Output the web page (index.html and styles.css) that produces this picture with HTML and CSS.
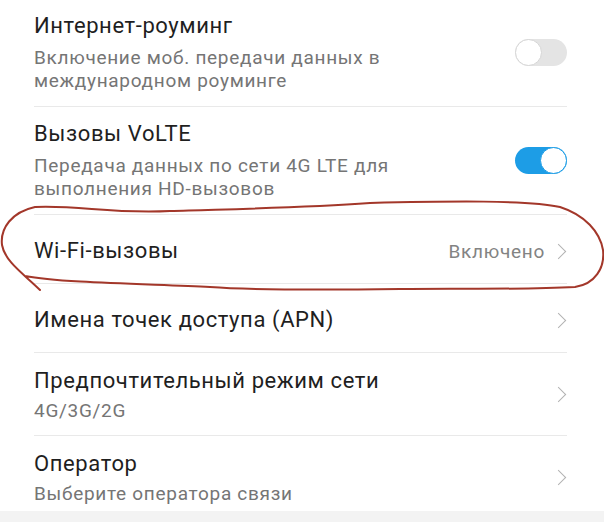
FILE: index.html
```html
<!DOCTYPE html>
<html>
<head>
    <title>Мобильная сеть</title>
    <link rel="stylesheet" href="styles.css">
</head>
<body>
    <div class="settings">
        <div class="row row-multi">
            <div class="text">
                <div class="title">Интернет-роуминг</div>
                <div class="summary">Включение моб. передачи данных в<br>международном роуминге</div>
            </div>
            <span class="switch"></span>
        </div>
        <div class="row row-multi">
            <div class="text">
                <div class="title">Вызовы VoLTE</div>
                <div class="summary">Передача данных по сети 4G LTE для<br>выполнения HD-вызовов</div>
            </div>
            <span class="switch on"></span>
        </div>
        <div class="row row-single">
            <div class="text">
                <div class="title">Wi-Fi-вызовы</div>
            </div>
            <span class="value">Включено</span>
            <span class="chevron"></span>
        </div>
        <div class="row row-single">
            <div class="text">
                <div class="title">Имена точек доступа (APN)</div>
            </div>
            <span class="chevron"></span>
        </div>
        <div class="row">
            <div class="text">
                <div class="title">Предпочтительный режим сети</div>
                <div class="summary">4G/3G/2G</div>
            </div>
            <span class="chevron"></span>
        </div>
        <div class="row row-last">
            <div class="text">
                <div class="title">Оператор</div>
                <div class="summary">Выберите оператора связи</div>
            </div>
            <span class="chevron"></span>
        </div>
        <div class="footer"></div>
    </div>

    <!-- hand drawn mark round the Wi-Fi row -->
    <svg class="scribble" width="604" height="522" viewBox="0 0 604 522">
        <path d="M40 290 C25 275, 5 262, 2 245 C0 228, 12 212, 35 207 C80 205, 110 214, 170 211 C230 209, 300 208, 370 203 C450 201, 530 200, 560 207 C585 215, 600 232, 603 250 C605 268, 595 284, 575 287 C520 290, 460 288, 400 289 C320 290, 250 290, 210 287 C150 284, 60 283, 25 276"
              fill="none" stroke="#a3372a" stroke-width="2" stroke-linecap="round"/>
    </svg>
</body>
</html>
```

FILE: styles.css
```css
body {
    background-color: #ffffff;
    color: #1e1e1e;
    font-family: 'Roboto', 'Noto Sans', sans-serif;
    margin: 0;
    padding: 0;
    overflow: hidden;
}

.settings {
    padding: 0 37px 0 34px;
    margin-top: -1px;
}

.row {
    display: flex;
    align-items: center;
    padding: 14px 0 13px;
    border-bottom: 1px solid #e9e9e9;
}

.row-multi {
    padding: 13px 0 14px;
}

.row-multi .summary {
    margin-top: 6px;
}

.row-single {
    padding: 22px 0 18px;
}

.row-last {
    border-bottom: none;
    padding-bottom: 6px;
}

.text {
    flex: 1;
}

.title {
    font-size: 22px;
    line-height: 28px;
    letter-spacing: 0.6px;
    color: #1f1f1f;
}

.summary {
    font-size: 19px;
    line-height: 23px;
    letter-spacing: 0.7px;
    margin-top: 4px;
    color: #757575;
}

.value {
    font-size: 19px;
    letter-spacing: 0.7px;
    color: #838383;
    margin-right: 8px;
}

.chevron {
    width: 10px;
    height: 10px;
    border-top: 1.6px solid #b2b2b2;
    border-right: 1.6px solid #b2b2b2;
    transform: rotate(45deg);
    margin-right: 3px;
}

.switch {
    position: relative;
    width: 52px;
    height: 27px;
    border-radius: 14px;
    background-color: #e4e4e4;
}

.switch::after {
    content: '';
    position: absolute;
    top: 0;
    left: 0;
    width: 25px;
    height: 25px;
    border-radius: 50%;
    background-color: #ffffff;
    border: 1px solid #d6d6d6;
}

.switch.on {
    background-color: #1d9de6;
}

.switch.on::after {
    left: auto;
    right: 0;
    border-color: #1d9de6;
}

.footer {
    height: 11px;
    margin: 0 -37px 0 -34px;
    background-color: #f3f3f3;
}

.scribble {
    position: absolute;
    top: 0;
    left: 0;
    pointer-events: none;
}
```
